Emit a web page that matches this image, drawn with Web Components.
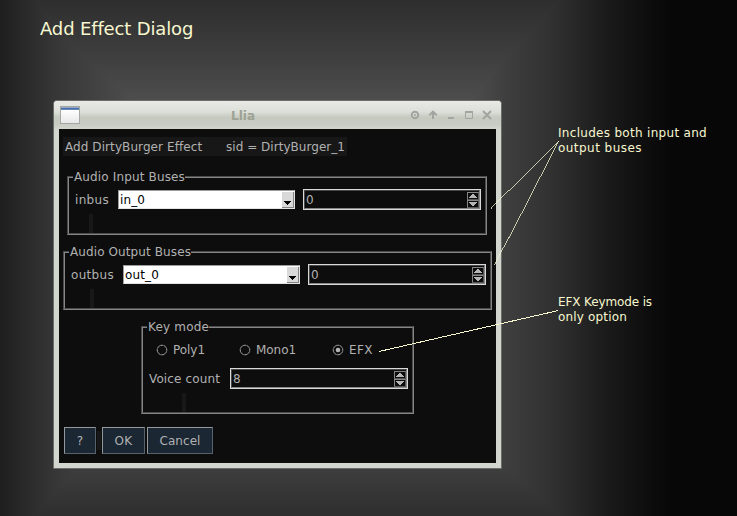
<!DOCTYPE html>
<html lang="en">
<head>
<meta charset="utf-8">
<title>Add Effect Dialog</title>
<style>
html,body{margin:0;width:737px;height:516px;overflow:hidden;background:#070707}
body{font:12px/15px "DejaVu Sans",sans-serif}
</style>
</head>
<body>
<effect-slide></effect-slide>
<script>
const define = (name, html, init) => customElements.define(name, class extends HTMLElement {
  constructor() {
    super();
    this.attachShadow({ mode: 'open' }).innerHTML = html;
  }
  connectedCallback() { if (init) init(this, this.shadowRoot); }
});

/* one line of text whose tracking is set so that it spans w pixels */
define('fit-text', `<style>:host{display:inline-block;white-space:pre}span{display:inline-block}</style><span></span>`, (el, root) => {
  const s = root.querySelector('span');
  s.textContent = el.getAttribute('t');
  const w = +el.getAttribute('w');
  if (w) {
    s.style.letterSpacing = (w - s.getBoundingClientRect().width) / s.textContent.length + 'px';
    el.style.width = w + 'px';
  }
});

define('ghost-bar', `<style>:host{display:block;width:4px;height:19px;background:#181818}</style>`);

define('group-box', `<style>
:host{display:block;box-sizing:border-box;position:relative;border:1px solid;border-color:#4b4b4b #858585 #858585 #4b4b4b}
.in{box-sizing:border-box;height:100%;border:1px solid;border-color:#858585 #4b4b4b #4b4b4b #858585}
.legend{position:absolute;left:5px;top:-7px;height:15px;padding-left:1px;background:#0d0d0d}
</style><div class="legend"><slot name="legend"></slot></div><div class="in"><slot></slot></div>`);

define('combo-box', `<style>
:host{display:flex;box-sizing:border-box;width:177px;height:19px;background:#fff;color:#000;border:1px solid;border-color:#9c9c9c #e4e4e4 #e4e4e4 #9c9c9c;padding:1px 0 0 1px}
.v{flex:1;line-height:16px}
.b{box-sizing:border-box;width:12px;height:16px;background:#d9d9d9;border-right:1px solid #848484;border-bottom:1px solid #848484}
svg{display:block}
</style><div class="v"><slot></slot></div><div class="b"><svg width="11" height="15"><path d="M2 9h7v1h-1v1h-1v1h-1v1h-1v-1h-1v-1h-1v-1h-1z" shape-rendering="crispEdges"/></svg></div>`);

define('spin-box', `<style>
:host{display:block;box-sizing:border-box;width:178px;height:21px;border:1px solid #d9d9d9}
.in{display:flex;box-sizing:border-box;height:19px;border:1px solid;border-color:#484848 #858585 #858585 #484848}
.v{flex:1;padding-left:1px;line-height:19px;height:17px}
.a{width:12px;margin-top:1px}
.a div{box-sizing:border-box;width:12px;height:8px;border:1px solid;border-color:#858585 #555 #555 #858585}
.a svg{display:block}
</style><div class="in"><div class="v"><slot></slot></div><div class="a">
<div><svg width="10" height="6" shape-rendering="crispEdges"><path d="M4 1h2v1h1v1h1v1h1v1H1V4h1V3h1V2h1z" fill="#b6b6b6"/></svg></div>
<div><svg width="10" height="6" shape-rendering="crispEdges"><path d="M1 1h8v1H8v1H7v1H6v1H4V4H3V3H2V2H1z" fill="#b6b6b6"/></svg></div>
</div></div>`);

define('radio-item', `<style>
:host{display:flex;align-items:center;height:15px;gap:5px}
svg{display:block;margin-top:-2px}circle{fill:none}.dot{display:none}:host([checked]) .dot{display:block;fill:#b4b4b4}
</style><svg width="12" height="12"><circle cx="6" cy="6" r="4.8" stroke="#a5a5a5"/><circle cx="6" cy="6" r="4.8" stroke="#3a3a3a" stroke-dasharray="1.5 2.27" stroke-width=".8"/><circle class="dot" cx="6" cy="6" r="2.3"/></svg><slot></slot>`);

define('push-button', `<style>
:host{display:flex;box-sizing:border-box;height:27px;padding-top:2px;align-items:center;justify-content:center;background:#1b2733;border:1px solid;border-color:#92989c #56626c #56626c #92989c}
</style><slot></slot>`);

define('title-bar', `<style>
:host{display:flex;align-items:center;height:28px;box-sizing:border-box;padding:0 9px 0 6px;background:linear-gradient(#e9eae6,#dcded8 40%,#cdd0c8 52%,#c6c9c0 60%,#c9ccc4 85%,#d2d5ce)}
.app{box-sizing:border-box;width:20px;height:18px;border:1px solid #a5a7a3;background:linear-gradient(#99a9c1 0 1px,#466fb2 1px 2px,#6686b8 2px 3px,#fff 3px,#e7e7e7)}
.t{flex:1;text-align:center;font-weight:bold;color:#9ca192;padding:2px 4px 0 0;line-height:15px}
</style><div class="app"></div><div class="t"><fit-text t="Llia" w="24"></fit-text></div>
<svg width="82" height="12" fill="none" stroke="#a2a49f">
<circle cx="5" cy="6" r="3.3" stroke-width="1.9"/><circle cx="5" cy="6" r="1" fill="#a2a49f" stroke="none"/>
<path d="M23 10V3M19.3 6.2L23 2.7l3.7 3.5" stroke-width="2"/>
<path d="M38 9h6" stroke-width="2"/>
<path d="M55.5 2.5h7v7h-7z"/><path d="M55 3h8" stroke-width="2"/>
<path d="M73 2l8 8M81 2l-8 8" stroke-width="2"/></svg>`);

define('effect-dialog', `<style>
:host{display:block;box-sizing:border-box;width:449px;height:369px;border:1px solid #6b6e68;border-radius:4px 4px 1px 1px;background:#d3d6ce;overflow:hidden;color:#b1b1b1}
.body{display:flex;flex-direction:column;align-items:flex-start;box-sizing:border-box;width:437px;height:334px;margin-left:5px;padding:8px 0 0 4px;background:#0d0d0d}
.head{display:flex;gap:24px;box-sizing:border-box;width:284px;height:19px;padding:3px 0 0 2px;background:#171717}
group-box.a{width:420px;height:59px;margin:20px 0 0 4px}
group-box.b{width:429px;height:59px;margin-top:16px}
group-box.c{width:273px;height:88px;margin:16px 0 0 78px}
.row{display:flex;align-items:center;height:21px}
.row>fit-text{padding-top:2px}
.a .row{padding:11px 0 0 6px}.b .row{padding:11px 0 0 6px}
.a combo-box{margin:0 8px 0 9px}.b combo-box{margin:0 8px 0 9px}
.a ghost-bar{margin:4px 0 0 20px}.b ghost-bar{margin:4px 0 0 25px}
.radios{display:flex;padding:15px 0 0 13px}
.row.voice{padding:10px 0 0 6px}.voice spin-box{margin-left:10px}
.c ghost-bar{margin:4px 0 0 39px}
.btns{display:flex;align-items:center;margin:13px 0 0 1px}
.btns ghost-bar{margin:0 1px}
</style>
<title-bar></title-bar>
<div class="body">
<div class="head"><fit-text t="Add DirtyBurger Effect" w="137"></fit-text><fit-text t="sid = DirtyBurger_1" w="119"></fit-text></div>
<group-box class="a"><fit-text slot="legend" t="Audio Input Buses" w="111"></fit-text>
<div class="row"><fit-text t="inbus" w="34"></fit-text><combo-box><fit-text t="in_0" w="25"></fit-text></combo-box><spin-box>0</spin-box></div><ghost-bar></ghost-bar></group-box>
<group-box class="b"><fit-text slot="legend" t="Audio Output Buses" w="121"></fit-text>
<div class="row"><fit-text t="outbus" w="43"></fit-text><combo-box><fit-text t="out_0" w="34"></fit-text></combo-box><spin-box>0</spin-box></div><ghost-bar></ghost-bar></group-box>
<group-box class="c"><fit-text slot="legend" t="Key mode" w="61"></fit-text>
<div class="radios"><radio-item><fit-text t="Poly1" w="32"></fit-text></radio-item><radio-item style="margin-left:34px"><fit-text t="Mono1" w="40"></fit-text></radio-item><radio-item checked style="margin-left:36px"><fit-text t="EFX" w="24"></fit-text></radio-item></div>
<div class="row voice"><fit-text t="Voice count" w="71"></fit-text><spin-box>8</spin-box></div><ghost-bar></ghost-bar></group-box>
<div class="btns"><push-button style="width:32px">?</push-button><ghost-bar></ghost-bar><push-button style="width:43px"><fit-text t="OK" w="18"></fit-text></push-button><push-button style="width:66px;margin-left:2px"><fit-text t="Cancel" w="41"></fit-text></push-button></div>
</div>`);

define('effect-slide', `<style>
:host{display:block;position:relative;width:737px;height:516px;color:#f8f8d0;
background:
linear-gradient(90deg,#1e1e1e 0,#2e2e2e 35px,#383838 60px,#4c4c4c 130px,#555 200px,#555 400px,#4c4c4c 475px,#404040 502px,#2e2e2e 560px,#1b1b1b 605px,#0b0b0b 655px,#070707 675px),
linear-gradient(#2e2e2e 0,#3c3c3c 48px,#4d4d4d 100px,#555 150px,#555 370px,#3e3e3e 468px,#2e2e2e 516px);
background-blend-mode:darken}
effect-dialog,.n,.lines{position:absolute}
effect-dialog{left:53px;top:100px}
.n{display:flex;flex-direction:column;align-items:flex-start}
</style>
<div class="n" style="left:40px;top:17px;font-size:18px;line-height:23px"><fit-text t="Add Effect Dialog" w="153"></fit-text></div>
<effect-dialog></effect-dialog>
<div class="n" style="left:558px;top:126px"><fit-text t="Includes both input and" w="149"></fit-text><fit-text t="output buses" w="84"></fit-text></div>
<div class="n" style="left:558px;top:295px"><fit-text t="EFX Keymode is" w="94"></fit-text><fit-text t="only option" w="69"></fit-text></div>
<svg class="lines" style="left:0;top:0" width="737" height="516" fill="none" stroke="#f8f8d0" stroke-width=".75" shape-rendering="crispEdges"><path d="M558.5 140.5L491 208.5M558.5 140.5L494.5 265"/><path d="M558.5 310.5L379 351.5" stroke-width="1"/></svg>`);
</script>
</body>
</html>
